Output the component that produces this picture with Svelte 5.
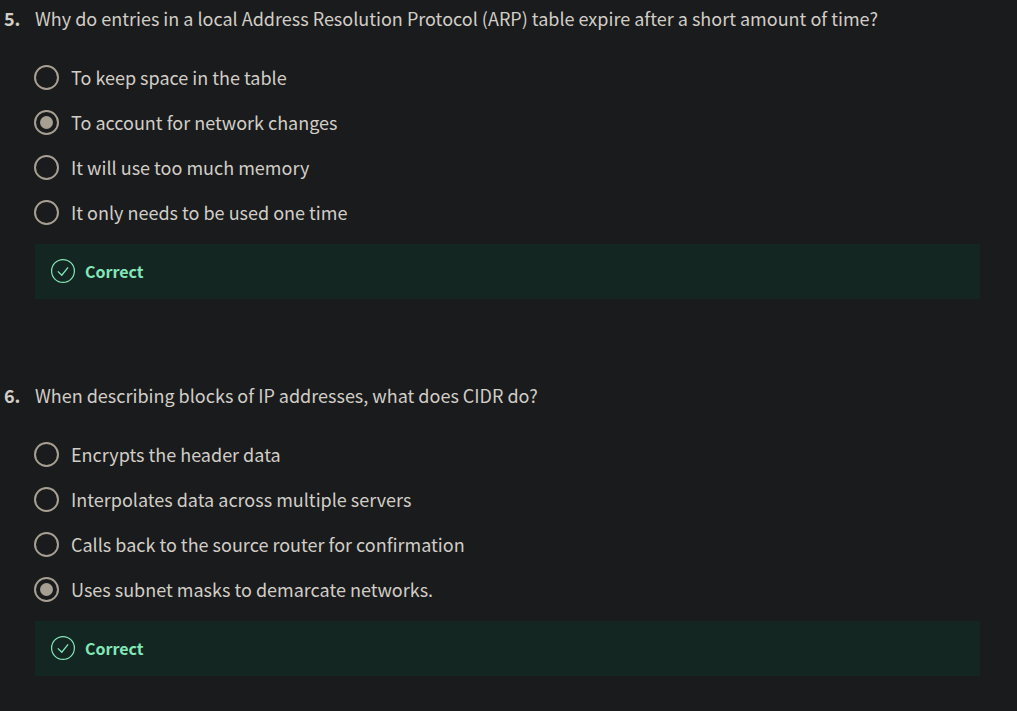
<script>
  let questions = $state([
    {
      number: 5,
      text: 'Why do entries in a local Address Resolution Protocol (ARP) table expire after a short amount of time?',
      options: [
        'To keep space in the table',
        'To account for network changes',
        'It will use too much memory',
        'It only needs to be used one time'
      ],
      answer: 1
    },
    {
      number: 6,
      text: 'When describing blocks of IP addresses, what does CIDR do?',
      options: [
        'Encrypts the header data',
        'Interpolates data across multiple servers',
        'Calls back to the source router for confirmation',
        'Uses subnet masks to demarcate networks.'
      ],
      answer: 3
    }
  ]);
</script>

<main>
  {#each questions as q (q.number)}
    <section>
      <span class="number">{q.number}.</span>
      <fieldset>
        <legend>{q.text}</legend>
        <div class="options">
          {#each q.options as option, i}
            <label>
              <input type="radio" name="question-{q.number}" value={i} bind:group={q.answer} />
              <span>{option}</span>
            </label>
          {/each}
        </div>
        <div class="feedback">
          <svg viewBox="0 0 24 24" width="24" height="24" fill="none" stroke="currentColor" aria-hidden="true">
            <circle cx="12" cy="12" r="11.4" stroke-width="1.2" />
            <path d="M6.8 12.4l4 3.8 6.3-7.8" stroke-width="1.3" />
          </svg>
          <strong>Correct</strong>
        </div>
      </fieldset>
    </section>
  {/each}
</main>

<style>
  :global(body) {
    margin: 0;
    background: #1a1b1c;
  }

  main {
    display: flex;
    flex-direction: column;
    gap: 83px;
    padding: 5px 37px 35px 4px;
    color: #d1cdc7;
    font: 18px/26px 'Noto Sans CJK SC', 'Noto Sans', sans-serif;
  }

  section {
    display: grid;
    grid-template-columns: 31px minmax(0, 1fr);
  }

  .number {
    font-weight: 700;
  }

  fieldset {
    min-width: 0;
    margin: 0;
    padding: 0;
    border: 0;
  }

  legend {
    padding: 0;
  }

  .options {
    display: flex;
    flex-direction: column;
    gap: 19px;
    margin: 33px 0 19px -1px;
  }

  label {
    display: flex;
    align-items: center;
    gap: 12px;
    cursor: pointer;
  }

  input {
    appearance: none;
    box-sizing: border-box;
    display: grid;
    place-items: center;
    flex: none;
    width: 25px;
    height: 25px;
    margin: 0;
    border: 2px solid #a89f93;
    border-radius: 50%;
    cursor: pointer;
  }

  input:checked::before {
    content: '';
    width: 13px;
    height: 13px;
    border-radius: 50%;
    background: #a89f93;
  }

  .feedback {
    display: flex;
    align-items: center;
    gap: 10px;
    padding: 14px 16px 15px;
    background: #142621;
    color: #83e6b9;
    font-size: 16px;
  }
</style>
